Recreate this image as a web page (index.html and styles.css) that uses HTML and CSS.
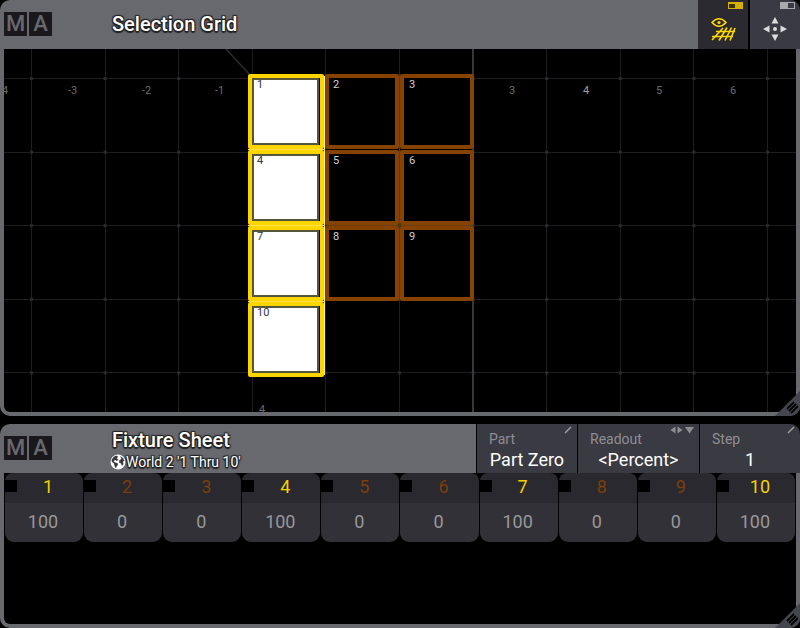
FILE: index.html
```html
<!DOCTYPE html>
<html lang="en">
<head>
  <meta charset="UTF-8" />
  <meta name="viewport" content="width=device-width, initial-scale=1.0"/>
  <title>Selection Grid / Fixture Sheet</title>
  <link rel="stylesheet" href="styles.css">
</head>
<body>
  <section class="window grid-window">
    <header class="titlebar">
      <div class="logo"><span>M</span><span>A</span></div>
      <div class="titles">
        <h2>Selection Grid</h2>
      </div>
      <div class="tools">
        <button class="icon-btn active" aria-label="Show grid">
          <svg width="50" height="49" viewBox="698 0 50 49">
            <rect x="728" y="2" width="15" height="7" fill="#d4b000"/>
            <rect x="729" y="4" width="6" height="4" fill="#3a300a"/>
            <g fill="none" stroke="#ffd800" stroke-width="1.6">
              <path d="M712 22.5Q719 15 726 22.5Q719 30 712 22.5Z"/>
              <path d="M716 31.5H735M712 36.5H733"/>
              <path d="M723 28L712 40M727 27.5L719 40.5M731.500 27.500L725 40.500M735 28L730 40.500"/>
            </g>
            <circle cx="719" cy="22.500" r="1.600" fill="#ffd800"/>
          </svg>
        </button>
        <button class="icon-btn" aria-label="Move">
          <svg width="50" height="49" viewBox="750 0 50 49">
            <rect x="780" y="2" width="15" height="7" fill="#aaaaae"/>
            <rect x="788" y="3" width="6" height="5" fill="#3a3a42"/>
            <g fill="#dcdcdc">
              <path d="M775 17L778.500 23.500H771.500Z"/>
              <path d="M775 41L778.500 34.500H771.500Z"/>
              <path d="M763 29L769.500 25.500V32.500Z"/>
              <path d="M787 29L780.500 25.500V32.500Z"/>
              <circle cx="775" cy="29" r="2"/>
            </g>
          </svg>
        </button>
      </div>
    </header>
    <div class="stage">
      <svg class="stage-svg" viewBox="4 49 792 363" preserveAspectRatio="xMidYMid slice">
        <defs>
          <pattern id="dots" x="30" y="77" width="73.6" height="73.6" patternUnits="userSpaceOnUse">
            <rect width="3" height="3" fill="#2a2a31"/>
          </pattern>
        </defs>
        <path class="grid-line" d="M4 78.5H796M4 152.5H796M4 225.5H796M4 299.5H796M4 372.5H796"/>
        <path class="grid-line" d="M31.5 49V412M105.5 49V412M178.5 49V412M252.5 49V412M325.5 49V412M399.5 49V412M546.5 49V412M620.5 49V412M693.5 49V412M767.5 49V412"/>
        <rect x="4" y="49" width="792" height="363" fill="url(#dots)"/>
        <path class="axis" d="M473 49V412"/>
        <path d="M226 49L251 76" stroke="#2c2c30" stroke-width="1.500"/>

        <g class="coord">
          <text x="-1" y="94">-4</text>
          <text x="68" y="94">-3</text>
          <text x="142" y="94">-2</text>
          <text x="215" y="94">-1</text>
          <text x="509" y="94">3</text>
          <text x="583" y="94" class="near">4</text>
          <text x="656" y="94">5</text>
          <text x="730" y="94">6</text>
          <text x="259" y="413">4</text>
        </g>

        <g class="cell">
          <rect x="327" y="76" width="70" height="71"/>
          <rect x="402" y="76" width="70" height="71"/>
          <rect x="327" y="152" width="70" height="71"/>
          <rect x="402" y="152" width="70" height="71"/>
          <rect x="327" y="228" width="70" height="71"/>
          <rect x="402" y="228" width="70" height="71"/>
        </g>
        <path d="M327 225.500H472" stroke="#6e3c0c"/>
        <path d="M399.500 74V301" stroke="#3c3c42"/>

        <path d="M324.500 76V375" stroke="#fff1a0"/>
        <g class="cell selected">
          <rect x="250" y="76" width="72" height="71"/>
          <rect x="250" y="152" width="72" height="71"/>
          <rect x="250" y="228" width="72" height="71"/>
          <rect x="250" y="304" width="72" height="71"/>
        </g>
        <path d="M248 149.500H325M248 225.500H325M248 301.500H325" stroke="#ffe34a"/>
        <g class="face">
          <rect x="253" y="79" width="65" height="65"/>
          <rect x="253" y="155" width="65" height="65"/>
          <rect x="253" y="231" width="65" height="65"/>
          <rect x="253" y="307" width="65" height="65"/>
        </g>

        <g class="num">
          <text x="257" y="88" class="dark">1</text>
          <text x="333" y="88">2</text>
          <text x="409" y="88">3</text>
          <text x="257" y="164" class="dark">4</text>
          <text x="333" y="164">5</text>
          <text x="409" y="164">6</text>
          <text x="257" y="240" class="dark">7</text>
          <text x="333" y="240">8</text>
          <text x="409" y="240">9</text>
          <text x="257" y="316" class="dark">10</text>
        </g>
      </svg>
    </div>
    <svg class="resize" width="25" height="25" viewBox="0 0 25 25">
      <path d="M25 0V25H0Z" fill="#45454d"/>
      <path d="M12 18L19 11M14 20L21 13M16 22L23 15" stroke="#000" stroke-width="1.800"/>
    </svg>
  </section>

  <section class="window sheet-window">
    <header class="titlebar">
      <div class="logo"><span>M</span><span>A</span></div>
      <div class="titles">
        <h2>Fixture Sheet</h2>
        <p>
          <svg width="16" height="16" viewBox="0 0 16 16">
            <circle cx="8" cy="8" r="7.500" fill="#fff"/>
            <path d="M6 1.500L8 2.500L7 4.500L8.500 6L6.500 7L5.500 6L3.500 7L5 8.500L7.500 9L8 11L6.500 12.500L6 14.500L4.500 12L4 9.500L2 8L1.500 6L3.500 3Z" fill="#3a3a3e"/>
            <path d="M10 2L13 4L14.500 7L13 7.500L13.500 10L12 12L11 9.500L9 8.500L9.500 6L11.500 5Z" fill="#3a3a3e"/>
          </svg>
          World 2 '1 Thru 10'
        </p>
      </div>
      <div class="tools">
        <button class="option part">
          <span class="label">Part</span>
          <span class="value">Part Zero</span>
          <svg class="mark" width="8" height="8" viewBox="0 0 8 8"><path d="M1 7L7 1" stroke="#a0a09c" stroke-width="1.500"/></svg>
        </button>
        <button class="option readout">
          <span class="label">Readout</span>
          <span class="value">&lt;Percent&gt;</span>
          <svg class="mark" width="24" height="8" viewBox="0 0 24 8"><path d="M5.500 0.500V7.500L0.500 4ZM7.500 0.500V7.500L12.500 4ZM15 1H24L19.500 7.500Z" fill="#8e8e92"/></svg>
        </button>
        <button class="option step">
          <span class="label">Step</span>
          <span class="value">1</span>
          <svg class="mark" width="8" height="8" viewBox="0 0 8 8"><path d="M1 7L7 1" stroke="#a0a09c" stroke-width="1.500"/></svg>
        </button>
      </div>
    </header>
    <div class="sheet">
      <table>
        <thead>
          <tr>
            <th class="on"><div><i></i><span>1</span></div></th>
            <th><div><i></i><span>2</span></div></th>
            <th><div><i></i><span>3</span></div></th>
            <th class="on"><div><i></i><span>4</span></div></th>
            <th><div><i></i><span>5</span></div></th>
            <th><div><i></i><span>6</span></div></th>
            <th class="on"><div><i></i><span>7</span></div></th>
            <th><div><i></i><span>8</span></div></th>
            <th><div><i></i><span>9</span></div></th>
            <th class="on"><div><i></i><span>10</span></div></th>
          </tr>
        </thead>
        <tbody>
          <tr>
            <td>100</td>
            <td>0</td>
            <td>0</td>
            <td>100</td>
            <td>0</td>
            <td>0</td>
            <td>100</td>
            <td>0</td>
            <td>0</td>
            <td>100</td>
          </tr>
        </tbody>
      </table>
    </div>
    <svg class="resize" width="25" height="25" viewBox="0 0 25 25">
      <path d="M25 0V25H0Z" fill="#45454d"/>
      <path d="M12 18L19 11M14 20L21 13M16 22L23 15" stroke="#000" stroke-width="1.800"/>
    </svg>
  </section>
</body>
</html>
```
FILE: styles.css
```css
* { margin: 0; padding: 0; box-sizing: border-box; }
body {
  display: flex;
  flex-direction: column;
  gap: 8px;
  height: 100vh;
  background: #000;
  color: #fff;
  font-family: Roboto, "Liberation Sans", sans-serif;
}
button { font-family: inherit; color: inherit; border: none; cursor: pointer; }

/* windows */
.window {
  position: relative;
  display: flex;
  flex-direction: column;
  background: #68696f;
  border-radius: 10px;
  overflow: hidden;
}
.grid-window { flex: 1; min-height: 0; }
.sheet-window { min-height: 204px; }
.resize { position: absolute; right: 0; bottom: 0; }

/* title bar */
.titlebar {
  display: flex;
  height: 49px;
  flex-shrink: 0;
  padding-left: 4px;
}
.logo { display: flex; gap: 2px; width: 108px; padding-top: 12px; }
.logo span {
  width: 23px;
  height: 24px;
  background: #1a181c;
  color: #68696f;
  font-size: 22px;
  line-height: 24px;
  font-weight: 500;
  text-align: center;
}
.titles {
  flex: 1;
  white-space: nowrap;
  text-shadow: 1px 1px 1px #222, -1px -1px 1px #222, 1px -1px 1px #222, -1px 1px 1px #222, 0 2px 1px #222;
}
.titles h2 { font-size: 20px; line-height: 24px; font-weight: 500; padding-top: 4px; }
.grid-window h2 { padding-top: 12px; }
.titles p {
  display: flex;
  align-items: center;
  margin-left: -2px;
  font-size: 14px;
  line-height: 20px;
}
.tools { display: flex; gap: 2px; background: #000; }
.icon-btn { width: 50px; background: #3a3a42; }
.icon-btn.active { background: #2a2a30; }
.icon-btn svg { display: block; }

.option {
  position: relative;
  display: flex;
  flex-direction: column;
  width: 100px;
  padding: 5px 12px;
  background: #3a3a42;
  text-align: left;
}
.sheet-window .tools { gap: 1px; padding-left: 1px; }
.readout { width: 121px; }
.label { font-size: 14px; line-height: 20px; color: #8e8e92; }
.value { font-size: 18px; line-height: 22px; text-align: center; white-space: nowrap; }
.mark { position: absolute; right: 5px; top: 2px; }

/* selection grid */
.stage {
  flex: 1;
  min-height: 0;
  margin: 0 4px 4px;
  background: #000;
  border-radius: 0 0 6px 6px;
  overflow: hidden;
}
.stage-svg { display: block; width: 100%; height: 100%; }
.grid-line { fill: none; stroke: #1d1d20; }
.axis { stroke: #38383c; stroke-width: 2; }
.stage-svg text { font-size: 11px; }
.coord { fill: #6c6c6c; }
.coord .near { fill: #a0a0a0; }
.cell rect { fill: #000; stroke: #864300; stroke-width: 4; stroke-linejoin: round; }
.cell.selected rect { stroke: #ffd500; }
.face rect { fill: #fff; stroke: #55553c; stroke-width: 2; }
.num { fill: #d0d0d0; }
.num .dark { fill: #333; }

/* fixture sheet */
.sheet {
  flex: 1;
  margin: 0 4px 4px;
  background: #000;
  border-radius: 0 0 6px 6px;
}
.sheet table {
  width: 100%;
  table-layout: fixed;
  border-collapse: separate;
  border-spacing: 1px 0;
  font-size: 18px;
}
.sheet th {
  height: 30px;
  background: #2a292f;
  border-radius: 8px 8px 0 0;
  color: #7a3f08;
  font-weight: 400;
  vertical-align: top;
}
.sheet th.on { color: #f5d000; }
.sheet th div { display: flex; align-items: center; height: 26px; }
.sheet th i { width: 12px; height: 12px; background: #000; }
.sheet th span { flex: 1; padding-right: 4px; }
.sheet td {
  height: 39px;
  padding: 0 2px 2px 0;
  background: #323137;
  border-radius: 0 0 9px 9px;
  color: #98989a;
  text-align: center;
}
```
